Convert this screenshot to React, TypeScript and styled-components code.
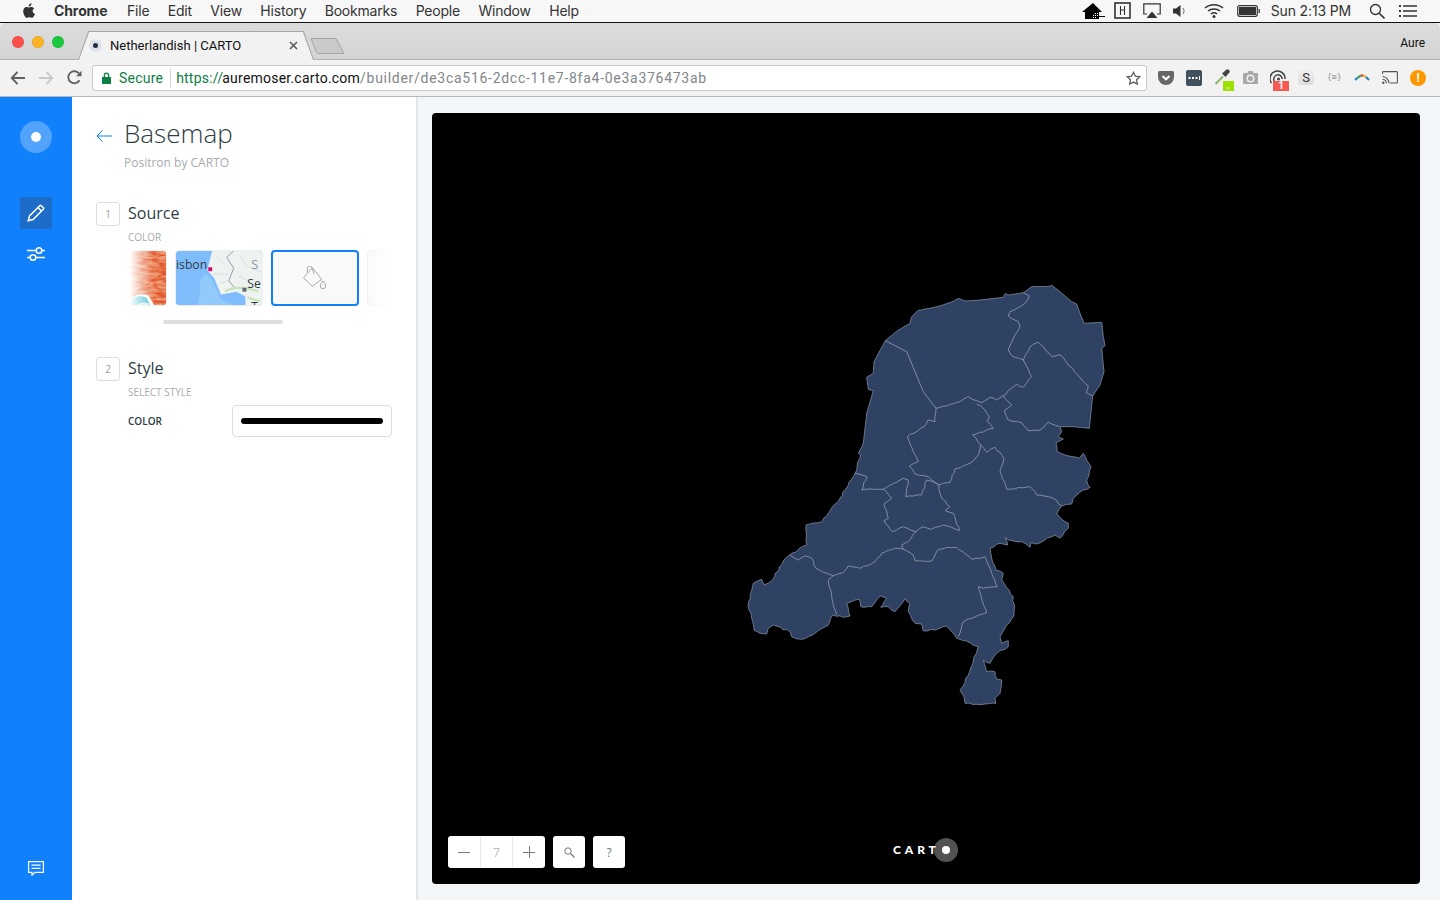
import React from "react";
import styled, { createGlobalStyle } from "styled-components";

const GlobalStyle = createGlobalStyle`
  html, body { margin: 0; padding: 0; height: 100%; overflow: hidden; background: #f2f6f9; }
  #root { height: 100%; }
  * { box-sizing: border-box; }
`;

const Screen = styled.div`
  width: 1440px;
  height: 900px;
  display: flex;
  flex-direction: column;
  overflow: hidden;
  font-family: "Open Sans", sans-serif;
`;

/* mac menu bar */
const MenuBar = styled.div`
  height: 23px;
  flex: none;
  display: flex;
  align-items: center;
  background: #f7f7f7;
  border-bottom: 1px solid #111;
  padding: 0 23px 1px 21px;
  font-family: Inter, sans-serif;
  font-size: 14px;
  color: #333;
`;

const MenuItems = styled.div`
  display: flex;
  align-items: center;
  gap: 18.4px;
  margin-left: 19px;
  flex: 1;
`;

const MenuItem = styled.span<{ $bold?: boolean }>`
  font-weight: ${(p) => (p.$bold ? 700 : 400)};
  letter-spacing: ${(p) => (p.$bold ? "-0.1px" : "-0.2px")};
  margin-right: ${(p) => (p.$bold ? "1px" : "0")};
`;

const Status = styled.div`
  display: flex;
  align-items: center;
`;

const Clock = styled.span`
  margin: 0 18px 0 11px;
  letter-spacing: -0.15px;
`;

/* browser chrome */
const TabStrip = styled.div`
  height: 37px;
  flex: none;
  display: flex;
  align-items: flex-end;
  background: linear-gradient(#dcdcdc, #d4d4d4);
  border-bottom: 1px solid #b0b0b0;
  border-radius: 5px 5px 0 0;
  padding-left: 12px;
`;

const Lights = styled.div`
  display: flex;
  gap: 8px;
  align-self: center;
  margin-top: 1px;
`;

const Light = styled.span<{ $color: string }>`
  width: 12px;
  height: 12px;
  border-radius: 50%;
  background: ${(p) => p.$color};
  box-shadow: inset 0 0 0 0.5px rgba(0, 0, 0, 0.12);
`;

const Tab = styled.div`
  position: relative;
  width: 236px;
  height: 29px;
  margin-left: 14px;
  margin-bottom: -1px;
  display: flex;
  align-items: center;
  padding: 0 16px 0 11px;
  font-family: Roboto, sans-serif;
  font-size: 13px;
  color: #111;

  &::before, &::after {
    content: "";
    position: absolute;
    inset: 0;
    z-index: 0;
  }
  &::before {
    background: #a8a8a8;
    clip-path: polygon(0 100%, 4.3% 0, 95.7% 0, 100% 100%);
  }
  &::after {
    background: #f2f2f2;
    clip-path: polygon(1px 100%, calc(4.3% + 1px) 1px, calc(95.7% - 1px) 1px, calc(100% - 1px) 100%);
  }
  & > * { position: relative; z-index: 1; }
`;

const Favicon = styled.span`
  width: 13px;
  height: 13px;
  border-radius: 50%;
  background: #dfe1e8;
  display: flex;
  align-items: center;
  justify-content: center;
  flex: none;
  &::after {
    content: "";
    width: 5px;
    height: 5px;
    border-radius: 50%;
    background: #1e2a4a;
  }
`;

const TabTitle = styled.span`
  margin-left: 8px;
  flex: 1;
`;

const NewTab = styled.svg`
  margin: 0 0 4px -4px;
  flex: none;
`;

const Profile = styled.span`
  margin-left: auto;
  align-self: center;
  margin-right: 15px;
  margin-top: 3px;
  font-family: Roboto, sans-serif;
  font-size: 12px;
  color: #111;
`;

const Toolbar = styled.div`
  height: 37px;
  flex: none;
  display: flex;
  align-items: center;
  background: #f2f2f2;
  border-bottom: 1px solid #b8b8b8;
  padding: 0 8px 1px 4px;
`;

const NavButton = styled.span`
  width: 28px;
  height: 20px;
  display: flex;
  align-items: center;
  justify-content: center;
  flex: none;
`;

const Omnibox = styled.div`
  width: 1055px;
  height: 26px;
  margin-left: 4px;
  flex: none;
  display: flex;
  align-items: center;
  background: #fff;
  border: 1px solid #c8c8c8;
  border-radius: 3px;
  padding: 0 5px 0 9px;
  font-family: Roboto, sans-serif;
  font-size: 14px;
  letter-spacing: 0.22px;
`;

const Secure = styled.span`
  display: flex;
  align-items: center;
  gap: 8px;
  color: #0b8043;
  padding-right: 7px;
  border-right: 1px solid #d8d8d8;
  height: 20px;
  margin-right: 5px;
`;

const UrlScheme = styled.span`
  color: #0b8043;
`;
const UrlHost = styled.span`
  color: #111;
  margin-left: -1px;
`;
const UrlPath = styled.span`
  color: #80868b;
  letter-spacing: 0.72px;
  flex: 1;
`;

const Extensions = styled.div`
  display: flex;
  margin-left: 5px;
`;

const Extension = styled.span`
  position: relative;
  width: 28px;
  height: 24px;
  display: flex;
  align-items: center;
  justify-content: center;
`;

const Badge = styled.span<{ $bg: string; $wide?: boolean }>`
  position: absolute;
  right: ${(p) => (p.$wide ? "3px" : "2px")};
  bottom: -1px;
  width: ${(p) => (p.$wide ? "16px" : "11px")};
  height: 10px;
  background: ${(p) => p.$bg};
  color: #fff;
  font: 700 10px/10px Roboto, sans-serif;
  text-align: center;
`;

const SBox = styled.span`
  width: 16px;
  height: 15px;
  border-radius: 3px;
  background: linear-gradient(#eeeeee, #dcdcdc);
  color: #333;
  font: 400 13px/15px Roboto, sans-serif;
  text-align: center;
`;

const Braces = styled.span`
  font: 400 9px/1 "DejaVu Sans Mono", monospace;
  letter-spacing: -0.6px;
  color: #999;
`;

const Alert = styled.span`
  width: 16px;
  height: 16px;
  border-radius: 50%;
  background: #ff9800;
  color: #fff;
  font: 700 12px/16px Roboto, sans-serif;
  text-align: center;
`;

/* app */
const Body = styled.div`
  flex: 1;
  min-height: 0;
  display: flex;
`;

const Rail = styled.nav`
  width: 72px;
  flex: none;
  background: #1181fb;
  display: flex;
  flex-direction: column;
  align-items: center;
  padding: 24px 0 24px;
`;

const Logo = styled.div`
  width: 32px;
  height: 32px;
  border-radius: 50%;
  background: rgba(255, 255, 255, 0.27);
  display: flex;
  align-items: center;
  justify-content: center;
  margin-bottom: 44px;
  &::after {
    content: "";
    width: 10px;
    height: 10px;
    border-radius: 50%;
    background: #fff;
  }
`;

const RailButton = styled.div<{ $active?: boolean }>`
  width: 32px;
  height: 32px;
  border-radius: 3px;
  display: flex;
  align-items: center;
  justify-content: center;
  margin-bottom: 9px;
  background: ${(p) => (p.$active ? "#1c6cc8" : "transparent")};
`;

const RailFoot = styled.div`
  margin-top: auto;
  display: flex;
`;

const Panel = styled.aside`
  width: 346px;
  flex: none;
  background: #fff;
  border-right: 2px solid #e3e6e8;
  padding: 20px 24px 0;
`;

const PanelHead = styled.header`
  display: flex;
  align-items: flex-start;
  gap: 12px;
  margin-bottom: 31px;
`;

const BackIcon = styled.svg`
  margin-top: 13px;
  flex: none;
`;

const Title = styled.h1`
  margin: 0;
  font-weight: 300;
  font-size: 26px;
  line-height: 32px;
  color: #2e3c43;
`;

const Subtitle = styled.div`
  margin-top: 6px;
  font-size: 12px;
  line-height: 16px;
  color: #a6acae;
`;

const Section = styled.section`
  display: grid;
  grid-template-columns: 24px 1fr;
  column-gap: 8px;
  margin-bottom: 19px;
`;

const StepBox = styled.div`
  width: 24px;
  height: 24px;
  border: 1px solid #dddddd;
  border-radius: 3px;
  font-size: 10px;
  line-height: 22px;
  text-align: center;
  color: #979ea1;
`;

const StepBody = styled.div`
  min-width: 0;
`;

const StepTitle = styled.h2`
  margin: 0;
  font-weight: 400;
  font-size: 16px;
  line-height: 22px;
  color: #2e3c43;
`;

const Caption = styled.div`
  margin-top: 6px;
  font-size: 10px;
  line-height: 14px;
  color: #a6acae;
`;

const Carousel = styled.div`
  position: relative;
  width: 260px;
  margin-top: 6px;
  overflow: hidden;
  padding-bottom: 14px;

  &::before, &::after {
    content: "";
    position: absolute;
    top: 0;
    height: 56px;
    z-index: 2;
  }
  &::before {
    left: 0;
    width: 26px;
    background: linear-gradient(90deg, #fff 6%, rgba(255, 255, 255, 0));
  }
  &::after {
    right: 0;
    width: 24px;
    background: linear-gradient(270deg, #fff, rgba(255, 255, 255, 0));
  }
`;

const Thumbs = styled.div`
  display: flex;
  gap: 8px;
  margin-left: -49px;
`;

const Thumb = styled.div<{ $selected?: boolean }>`
  width: 88px;
  height: 56px;
  flex: none;
  border-radius: 4px;
  overflow: hidden;
  display: flex;
  align-items: center;
  justify-content: center;
  background: #f9f9f9;
  border: ${(p) => (p.$selected ? "2px solid #1181fb" : "1px solid #eee")};
`;

const ScrollBar = styled.div`
  width: 120px;
  height: 4px;
  margin: 14px 0 0 35px;
  border-radius: 2px;
  background: #dedede;
`;

const FieldRow = styled.div`
  display: flex;
  align-items: center;
  justify-content: space-between;
  margin: 6px 0 0;
  width: 264px;
`;

const FieldLabel = styled.label`
  font-size: 10px;
  font-weight: 600;
  color: #2e3c43;
`;

const ColorButton = styled.div`
  width: 160px;
  height: 32px;
  border: 1px solid #dddddd;
  border-radius: 4px;
  background: #fff;
  padding: 0 8px;
  display: flex;
  align-items: center;
`;

const ColorBar = styled.div`
  height: 6px;
  width: 100%;
  border-radius: 3px;
  background: #000;
`;

const Main = styled.main`
  flex: 1;
  background: #f2f6f9;
  padding: 16px 20px 16px 14px;
  min-width: 0;
`;

const MapCanvas = styled.div`
  position: relative;
  width: 100%;
  height: 100%;
  background: #000;
  border-radius: 4px;
  overflow: hidden;
`;

const MapSvg = styled.svg`
  position: absolute;
  inset: 0;
  width: 100%;
  height: 100%;
`;

const MapTools = styled.div`
  position: absolute;
  left: 16px;
  bottom: 16px;
  display: flex;
  gap: 8px;
`;

const ToolGroup = styled.div<{ $zoom?: boolean }>`
  display: flex;
  width: ${(p) => (p.$zoom ? "97px" : "32px")};
  height: 32px;
  background: #fff;
  border-radius: 3px;
  overflow: hidden;
`;

const ToolCell = styled.div<{ $muted?: boolean }>`
  flex: 1;
  display: flex;
  align-items: center;
  justify-content: center;
  font-size: 12px;
  color: ${(p) => (p.$muted ? "#b8bcbe" : "#747b7e")};
  & + & {
    border-left: 1px solid #e8e8e8;
  }
`;

const CartoMark = styled.div`
  position: absolute;
  left: 461px;
  bottom: 22px;
  height: 24px;
  display: flex;
  align-items: center;
  font-family: Lato, sans-serif;
  font-weight: 900;
  font-size: 12px;
  letter-spacing: 3.9px;
  color: #fff;
`;

const CartoWord = styled.span`
  margin-top: -1px;
`;

const CartoDot = styled.span`
  width: 24px;
  height: 24px;
  margin-left: -6px;
  border-radius: 50%;
  background: rgba(255, 255, 255, 0.32);
  display: flex;
  align-items: center;
  justify-content: center;
  &::after {
    content: "";
    width: 8px;
    height: 8px;
    border-radius: 50%;
    background: #fff;
  }
`;

const NL_OUTLINE =
  "885.3,340.7 897,331 910,323.3 911.3,317.3 917.7,310.7 940,306 953.3,301.3 958.3,298.3 965,301 980,300 1003.3,297.3 1005,293.7 1008.3,295 1023.3,292.7 1031.7,286.7 1049.3,286.3 1051.7,285.3 1060,291.7 1071.7,301.7 1076.7,304 1080,313.3 1084.3,323.3 1101.7,322.3 1103.3,336.7 1105,345.7 1101.7,348.3 1104,371.7 1100,385 1092.7,396 1089.3,428.3 1073.3,426.7 1060,426.7 1061.7,431.7 1058.3,436.7 1063.3,439 1056,442.7 1057.3,451.7 1065,455 1079.3,458.3 1083.3,453.3 1091,466.7 1086.7,480 1090,487.3 1083.3,490 1073.3,498.3 1071.7,504 1061.7,506 1056.7,514 1068.3,523.3 1068.3,528.3 1060,538.3 1055,535 1036.7,544 1030.7,542.7 1030,547.3 1021.7,541.7 1008.3,540 1005,537.3 1007.7,545 1000,543.3 990,548.3 991.7,558.3 996,570 1003.3,573.3 1001.7,580 1013.3,596.7 1014,616 1006.7,625 1000,636.7 1001.7,643.3 1008.3,640.7 1008.3,646.7 996.7,653.3 990,663.3 983.3,660 986.7,671.7 995,671.7 996.7,679 1001.7,680 1000,693.3 995,698.3 995.7,703.3 985,704 965,703.3 964,696.7 960,690 968.3,675 973.3,660 978.3,646.7 970,642.7 956.7,638.3 946.7,626 935,630 923.3,630.7 921.7,624 915,623.3 908.3,611.7 910,603.3 905,598.3 895,611.7 888.3,606.7 880.7,607.3 886.7,598.3 880.7,596 871.7,606.7 860.7,606.7 859.3,599.3 846.7,603.3 850,616 843.3,617.3 832.7,615 828.3,625 815,633.3 801.7,639.3 791.7,636.7 790,631.7 773.3,625 768.3,628.3 766.7,634 760,633.3 754,630 752.7,621.7 748,606 753.3,583.3 761.7,579.3 764,585 772.7,580 783.3,560.7 791.7,553.3 806.7,545 806,525 821.7,521.7 840,498.3 855,473.3 860.7,455 858.3,453.3 863.3,443.3 866.7,413.3 873.3,390.7 868.3,389.3 866.7,377.3 873.3,373.3 874,361.7";

const NL_BORDERS = [
  "885.3,340.7 906.7,351.7 923.3,391.7 936,408.3",
  "1023.3,292.7 1029.3,296 1025,303.3 1010,311.7 1008.3,316 1018.3,321.7 1020,326.7 1013.3,338.3 1008.3,350 1011.7,355.7 1023.3,360 1031.7,376.7 1023.3,387.3 1016.7,384 1003.3,395.7 996.7,400 990,397.3 981.7,402.7 976.7,400.7 968.3,396.7 960,401.7 936,408.3 935,421.7 928.3,420 924.3,426.7 907.3,436.7 918.3,461.7 909.3,466 915,474 928.3,476.7 939,485 950,482.3 955,469 970,463.3 978.3,455 980.7,445 972.7,435 993.3,428.3 987.3,421.7 989.3,416.7 985,410 976.7,404",
  "1023.3,360 1030,346.7 1038.3,342.3 1051.7,356.7 1060,354.7 1085,383.3 1088.3,386 1086,392.7 1092.7,396",
  "1003.3,395.7 1011.7,405 1004.3,410.7 1008.3,420 1021.7,422.7 1028.3,431 1040,430 1048.3,422.3 1059.3,426.7",
  "980.7,445 986.7,452.3 995,447.3 1004,458.3 1000,471.7 1006.7,489.3 1030,486.7 1036.7,495 1053.3,498.3 1061.7,506",
  "855,473.3 866.7,476.7 861.7,490 876.7,489.3 883.3,489.3 903.3,478.3 908.3,480 905.7,496.7 921.7,495 926.7,480 932.7,481.7 939,485",
  "883.3,489.3 891.7,498.3 884,504 888.3,518.3 884,520.7 892.7,531.7 903.3,526.7 916,531.7 908.3,541.7 901.7,545 903.3,549.3 895,548.3 881.7,553.3 875,561.7 860,568.3 848.3,566 843.3,572.7 833.3,575.7 816,568.3 811.7,558.3 805,556 798.3,560 790,555",
  "833.3,575.7 828.3,580 831.7,596.7 836.7,615",
  "939,485 940,493.3 941.7,498.3 950,506.7 945,510.7 953.3,513.3 959.3,530.7 943.3,525 931.7,529.3 923.3,526.7 916,531.7",
  "903.3,549.3 913.3,555 915,560.7 931.7,561 938.3,549.3 946.7,547.3 956.7,547.3 971.7,559.3 980.7,558.3 985,556.7 988.3,565 997.3,586.7 983.3,588.3 978.3,586.7 986.7,612.7 963.3,621.7 958.3,636.7",
];

// borders on the land are jagged, so break the long segments up a little
const roughen = (points: string, amp: number, minY = 0) => {
  const pts = points.split(" ").map((p) => p.split(",").map(Number));
  const out: string[] = [];
  pts.forEach(([x, y], i) => {
    out.push(`${x},${y}`);
    const next = pts[i + 1];
    if (!next) return;
    const len = Math.hypot(next[0] - x, next[1] - y);
    const steps = Math.floor(len / 3.5);
    for (let s = 1; s < steps; s++) {
      const px = x + ((next[0] - x) * s) / steps;
      const py = y + ((next[1] - y) * s) / steps;
      const h = Math.sin(px * 12.9898 + py * 78.233) * 43758.5453;
      const wobble = py < minY ? 0 : ((h - Math.floor(h)) * 2 - 1) * amp;
      out.push(`${(px - ((next[1] - y) / len) * wobble).toFixed(1)},${(py + ((next[0] - x) / len) * wobble).toFixed(1)}`);
    }
  });
  return out.join(" ");
};

const menuItems = ["File", "Edit", "View", "History", "Bookmarks", "People", "Window", "Help"];

const App = () => {
  return (
    <Screen>
      <GlobalStyle />
      <MenuBar>
        <svg width="14" height="17" viewBox="0 0 14 17">
          <path
            fill="#333"
            d="M11.6 9c0-1.7 1.4-2.5 1.5-2.6-.8-1.2-2.1-1.4-2.5-1.4-1.1-.1-2.1.6-2.6.6-.6 0-1.4-.6-2.3-.6C4.500 5 3.400 5.700 2.800 6.700c-1.300 2.200-.3 5.500.9 7.300.6.9 1.300 1.900 2.300 1.800.9 0 1.300-.6 2.400-.6s1.400.6 2.400.6 1.600-.9 2.200-1.800c.7-1 1-2 1-2.100-.1 0-2.400-.9-2.400-2.900zM9.800 3.600c.5-.6.800-1.500.7-2.300-.7 0-1.600.5-2.100 1.100-.5.5-.9 1.400-.8 2.200.8.1 1.700-.4 2.200-1z"
          />
        </svg>
        <MenuItems>
          <MenuItem $bold>Chrome</MenuItem>
          {menuItems.map((item) => (
            <MenuItem key={item}>{item}</MenuItem>
          ))}
        </MenuItems>
        <Status>
          <svg width="23" height="16" viewBox="0 0 23 16" style={{ marginRight: 9 }}>
            <path fill="#000" d="M11 0 L0 9 L3 9 L3 16 L17 16 L17 9 L20 9 Z" />
            <path stroke="#000" strokeWidth="1" d="M16 13.500 H23" />
            <path fill="#fff" d="M13 10h1v1h-1zM15 10h1v1h-1zM13 12h1v1h-1zM15 12h1v1h-1zM11 12h1v1h-1zM11 14h1v1h-1zM13 14h1v1h-1z" />
          </svg>
          <svg width="17" height="17" viewBox="0 0 17 17" style={{ marginRight: 12 }}>
            <rect x="1" y="1" width="15" height="15" fill="none" stroke="#333" strokeWidth="1.600" />
            <path stroke="#333" strokeWidth="1.100" fill="none" d="M6.500 4v9M10.500 4v9M6.500 8h4" />
          </svg>
          <svg width="18" height="15" viewBox="0 0 18 15" style={{ marginRight: 12 }}>
            <path fill="none" stroke="#333" strokeWidth="1.200" d="M4 11H.8V.8h16.400V11H14" />
            <path fill="#333" d="M3.500 15 9 8.500 14.500 15z" />
          </svg>
          <svg width="14" height="12" viewBox="0 0 14 12" style={{ marginRight: 17 }}>
            <path fill="#333" d="M0 3.500h3L7.500 0v12L3 8.500H0z" />
            <path fill="none" stroke="#666" strokeWidth="1" d="M10 3c1.300 1.800 1.300 4.200 0 6" />
          </svg>
          <svg width="20" height="15" viewBox="0 0 20 15" style={{ marginRight: 13 }}>
            <path fill="none" stroke="#333" strokeWidth="1.500" d="M1 5c5-4.500 13-4.500 18 0M4 8c3.200-2.800 8.800-2.800 12 0M7 11c1.700-1.300 4.300-1.300 6 0" />
            <circle cx="10" cy="13.500" r="1.500" fill="#333" />
          </svg>
          <svg width="23" height="12" viewBox="0 0 23 12">
            <rect x=".7" y=".7" width="19.600" height="10.600" rx="2" fill="none" stroke="#333" strokeWidth="1.200" />
            <rect x="2" y="2" width="17" height="8" fill="#333" />
            <rect x="21.500" y="4" width="1.500" height="4" fill="#555" />
          </svg>
          <Clock>Sun 2:13 PM</Clock>
          <svg width="16" height="16" viewBox="0 0 16 16" style={{ marginRight: 14 }}>
            <circle cx="6.500" cy="6.500" r="5" fill="none" stroke="#333" strokeWidth="1.300" />
            <path stroke="#333" strokeWidth="1.600" d="M10.200 10.200 15.500 15.500" />
          </svg>
          <svg width="18" height="12" viewBox="0 0 18 12">
            <path fill="#333" d="M0 0h2v2H0zM0 5h2v2H0zM0 10h2v2H0zM4 .2h14v1.600H4zM4 5.200h14v1.600H4zM4 10.200h14v1.600H4z" />
          </svg>
        </Status>
      </MenuBar>

      <TabStrip>
        <Lights>
          <Light $color="#fc4f4a" />
          <Light $color="#fdb324" />
          <Light $color="#19c93b" />
        </Lights>
        <Tab>
          <Favicon />
          <TabTitle>Netherlandish | CARTO</TabTitle>
          <svg width="9" height="9" viewBox="0 0 9 9">
            <path stroke="#5a5a5a" strokeWidth="1.600" d="M1 1 8 8M8 1 1 8" />
          </svg>
        </Tab>
        <NewTab width="36" height="18" viewBox="0 0 36 18">
          <path d="M1 1.500 H26 L34 16.500 H8 Q7 16.500 6.500 15.500 Z" fill="#cacaca" stroke="#a4a4a4" strokeWidth="1" />
        </NewTab>
        <Profile>Aure</Profile>
      </TabStrip>

      <Toolbar>
        <NavButton>
          <svg width="16" height="14" viewBox="0 0 16 14">
            <path fill="none" stroke="#5f5f5f" strokeWidth="1.800" d="M15 7H2M7.500 1 1.700 7l5.800 6" />
          </svg>
        </NavButton>
        <NavButton>
          <svg width="16" height="14" viewBox="0 0 16 14">
            <path fill="none" stroke="#c8c8c8" strokeWidth="1.800" d="M1 7h13M8.500 1l5.800 6-5.800 6" />
          </svg>
        </NavButton>
        <NavButton>
          <svg width="15" height="15" viewBox="0 0 15 15">
            <path fill="none" stroke="#5f5f5f" strokeWidth="1.800" d="M12.500 10.200A6 6 0 1 1 12 3.500" />
            <path fill="#5f5f5f" d="M14.500 .8v5.500H9z" />
          </svg>
        </NavButton>
        <Omnibox>
          <Secure>
            <svg width="9" height="12" viewBox="0 0 9 12">
              <path fill="#0b8043" d="M0 5h9v7H0zM1.700 5V3.200a2.800 2.800 0 0 1 5.600 0V5H6V3.300a1.500 1.500 0 0 0-3 0V5z" />
            </svg>
            Secure
          </Secure>
          <UrlScheme>https://</UrlScheme>
          <UrlHost>auremoser.carto.com</UrlHost>
          <UrlPath>/builder/de3ca516-2dcc-11e7-8fa4-0e3a376473ab</UrlPath>
          <svg width="15" height="14" viewBox="0 0 15 14">
            <path fill="none" stroke="#5f5f5f" strokeWidth="1.300" d="m7.500 1.300 1.900 3.900 4.300.6-3.100 3 .7 4.300-3.800-2-3.800 2 .7-4.300-3.100-3 4.300-.6z" />
          </svg>
        </Omnibox>
        <Extensions>
          <Extension>
            <svg width="16" height="14" viewBox="0 0 16 14">
              <path fill="#666" d="M1.500 0h13A1.500 1.500 0 0 1 16 1.500V6a8 8 0 0 1-16 0V1.500A1.500 1.500 0 0 1 1.500 0z" />
              <path fill="none" stroke="#fff" strokeWidth="2" d="m4.500 5 3.500 3.300L11.500 5" />
            </svg>
          </Extension>
          <Extension>
            <svg width="16" height="16" viewBox="0 0 16 16">
              <rect width="16" height="16" rx="2" fill="#40505c" />
              <path fill="#fff" d="M2.500 7h2v2h-2zM6 7h2v2H6zM9.500 7h2v2h-2zM13 6h1v4h-1z" />
            </svg>
          </Extension>
          <Extension>
            <svg width="17" height="17" viewBox="0 0 17 17">
              <path fill="none" stroke="#8db56a" strokeWidth="2.200" d="M1.500 15 9 7.500" />
              <path fill="#444" d="M8 4.500 12 1a2 2 0 0 1 3 3l-3.500 4z" />
            </svg>
            <Badge $bg="#9be000">.</Badge>
          </Extension>
          <Extension>
            <svg width="15" height="13" viewBox="0 0 15 13">
              <path fill="#a8a8a8" d="M1 2h3.500l1-2h4l1 2H14a1 1 0 0 1 1 1v9a1 1 0 0 1-1 1H1a1 1 0 0 1-1-1V3a1 1 0 0 1 1-1z" />
              <circle cx="7.500" cy="7.500" r="3.300" fill="none" stroke="#f2f2f2" strokeWidth="1.400" />
            </svg>
          </Extension>
          <Extension>
            <svg width="16" height="16" viewBox="0 0 16 16">
              <path fill="none" stroke="#444" strokeWidth="1.500" d="M1.500 13A7.500 7.500 0 1 1 15 9M4.800 12A4.300 4.300 0 1 1 12.300 9" />
              <circle cx="8.500" cy="9" r="1.500" fill="#444" />
            </svg>
            <Badge $bg="#f65a50" $wide>1</Badge>
          </Extension>
          <Extension>
            <SBox>S</SBox>
          </Extension>
          <Extension>
            <Braces>{"{≡}"}</Braces>
          </Extension>
          <Extension>
            <svg width="16" height="7" viewBox="0 0 16 7">
              <path fill="none" strokeWidth="2.200" stroke="#1f7fc4" d="M1 6 4 3.500" />
              <path fill="none" strokeWidth="2.200" stroke="#3ea34a" d="M4 3.500 7 1.500" />
              <path fill="none" strokeWidth="2.200" stroke="#e0403a" d="M7 1.500h2.500" />
              <path fill="none" strokeWidth="2.200" stroke="#f3b32a" d="M9.500 1.500 12 3" />
              <path fill="none" strokeWidth="2.200" stroke="#2a7fc9" d="M12 3 15 6" />
            </svg>
          </Extension>
          <Extension>
            <svg width="16" height="13" viewBox="0 0 16 13">
              <path fill="none" stroke="#555" strokeWidth="1.100" d="M.6 3V1.200A.6.600 0 0 1 1.200.6h13.600a.6.600 0 0 1 .6.600v10.200a.6.600 0 0 1-.6.600H8" />
              <path fill="none" stroke="#555" strokeWidth="1.100" d="M.5 5.500a7 7 0 0 1 6.500 6.800M.5 8.200a4.300 4.300 0 0 1 3.900 4.100" />
              <circle cx="1.300" cy="11.700" r="1.200" fill="#555" />
            </svg>
          </Extension>
          <Extension>
            <Alert>!</Alert>
          </Extension>
        </Extensions>
      </Toolbar>

      <Body>
        <Rail>
          <Logo />
          <RailButton $active>
            <svg width="18" height="18" viewBox="0 0 18 18">
              <path fill="none" stroke="#fff" strokeWidth="1.500" d="M1.300 16.700 2.500 12 12.800 1.700a1 1 0 0 1 1.400 0l2.100 2.100a1 1 0 0 1 0 1.400L6 15.500z" />
              <path stroke="#fff" strokeWidth="1.500" d="M11 3.500 14.500 7" />
            </svg>
          </RailButton>
          <RailButton>
            <svg width="18" height="16" viewBox="0 0 18 16">
              <path fill="none" stroke="#fff" strokeWidth="1.400" d="M0 4.500h9M15 4.500h3M0 11.500h3M9 11.500h9" />
              <circle cx="12" cy="4.500" r="2.800" fill="none" stroke="#fff" strokeWidth="1.500" />
              <circle cx="6" cy="11.500" r="2.800" fill="none" stroke="#fff" strokeWidth="1.500" />
            </svg>
          </RailButton>
          <RailFoot>
            <svg width="16" height="15" viewBox="0 0 16 15">
              <path fill="none" stroke="#fff" strokeWidth="1.200" d="M.6.600h14.800v10.800H7l-3 2.800v-2.800H.6z" />
              <path stroke="#fff" strokeWidth="1.200" d="M3.500 4.200h9M3.500 7.400h9" />
            </svg>
          </RailFoot>
        </Rail>

        <Panel>
          <PanelHead>
            <BackIcon width="16" height="12" viewBox="0 0 16 12">
              <path fill="none" stroke="#1181fb" strokeWidth="1" d="M16 6H1M6.500.5 1 6l5.500 5.500" />
            </BackIcon>
            <div>
              <Title>Basemap</Title>
              <Subtitle>Positron by CARTO</Subtitle>
            </div>
          </PanelHead>

          <Section>
            <StepBox>1</StepBox>
            <StepBody>
              <StepTitle>Source</StepTitle>
              <Caption>COLOR</Caption>
              <Carousel>
                <Thumbs>
                  <Thumb>
                    <svg width="88" height="56" viewBox="0 0 88 56">
                      <defs>
                        <filter id="stamen" colorInterpolationFilters="sRGB" x="0" y="0" width="100%" height="100%">
                          <feTurbulence type="fractalNoise" baseFrequency="0.1 0.35" numOctaves="3" seed="4" />
                          <feColorMatrix values="0 0 0 0 0.88  0 0 0 0 0.33  0 0 0 0 0.16  2.4 0 0 0 -0.7" />
                          <feComposite in2="SourceGraphic" operator="over" />
                        </filter>
                      </defs>
                      <rect width="88" height="56" fill="#f0a27c" filter="url(#stamen)" />
                      <path d="M48 56 Q54 41 70 46 L76 56 Z" fill="#fff" />
                      <path d="M48 56 Q54 43 68 48 L72 56 Z" fill="#45bfce" />
                      <path d="M58 56 Q62 51 71 54 V56 Z" fill="#c9ecec" />
                    </svg>
                  </Thumb>
                  <Thumb>
                    <svg width="88" height="56" viewBox="0 0 88 56">
                      <rect width="88" height="56" fill="#7fbcfb" />
                      <path d="M22 56 Q26 40 24 30 L30 24 L37 30 L46 50 L60 56 Z" fill="#92cafb" />
                      <path d="M37 0 L34 12 L32 20 L39 28 L46 45 L62 42 L71 47 L71 56 H88 V0 Z" fill="#eef2f1" />
                      <path d="M59 0 L52 7 L59 18 L54 31 L61 39" fill="none" stroke="#9a94ac" strokeWidth="1" />
                      <path d="M42 6 L50 14 M38 24 L54 24 M45 34 L55 30 M66 6 L72 16 L88 22 M64 26 L76 32" fill="none" stroke="#cfd6d4" strokeWidth=".7" />
                      <path d="M50 42 Q62 34 84 42 M73 48 L86 52" fill="none" stroke="#c3e3b5" strokeWidth="2" />
                      <rect x="33" y="17" width="4" height="4" fill="#d5086b" />
                      <rect x="68" y="38" width="4" height="4" fill="#667" />
                      <text x="0" y="19" fontFamily="Open Sans, sans-serif" fontSize="12.500" fill="#2e3c43">isbon</text>
                      <text x="77" y="19" fontFamily="Open Sans, sans-serif" fontSize="13" fill="#8d96a0">S</text>
                      <text x="73" y="38" fontFamily="Open Sans, sans-serif" fontSize="12.500" fill="#2e3c43">Se</text>
                      <text x="77" y="62" fontFamily="Open Sans, sans-serif" fontSize="12" fill="#2e3c43">T</text>
                    </svg>
                  </Thumb>
                  <Thumb $selected>
                    <svg width="24" height="25" viewBox="0 0 24 25">
                      <path fill="none" stroke="#a8a8a8" strokeWidth="1" strokeLinejoin="round" d="M.5 11.700 9.300 1.700 18.700 13.300 9.300 20.300Z" />
                      <path fill="none" stroke="#a8a8a8" strokeWidth="1" d="M4.300 6.700V2.500a2.500 2.500 0 0 1 5 0L11 8" />
                      <path fill="none" stroke="#a8a8a8" strokeWidth="1" d="M20 15c-1.500 2.300-2.700 3.500-2.700 5a2.700 2.700 0 0 0 5.400 0c0-1.500-1.200-2.700-2.700-5z" />
                    </svg>
                  </Thumb>
                  <Thumb />
                </Thumbs>
                <ScrollBar />
              </Carousel>
            </StepBody>
          </Section>

          <Section>
            <StepBox>2</StepBox>
            <StepBody>
              <StepTitle>Style</StepTitle>
              <Caption>SELECT STYLE</Caption>
              <FieldRow>
                <FieldLabel>COLOR</FieldLabel>
                <ColorButton>
                  <ColorBar />
                </ColorButton>
              </FieldRow>
            </StepBody>
          </Section>
        </Panel>

        <Main>
          <MapCanvas>
            <MapSvg viewBox="432 113 988 771">
              <polygon points={roughen(NL_OUTLINE, 0.9, 440)} fill="#2f4264" stroke="#7f8ba0" strokeWidth="0.8" strokeLinejoin="round" />
              {NL_BORDERS.map((points, i) => (
                <polyline key={points} points={i === 0 ? points : roughen(points, 0.7)} fill="none" stroke="#8893a8" strokeWidth="0.9" strokeLinejoin="round" />
              ))}
            </MapSvg>
            <MapTools>
              <ToolGroup $zoom>
                <ToolCell>
                  <svg width="12" height="12" viewBox="0 0 12 12">
                    <path stroke="#747b7e" strokeWidth="1" d="M0 6.500h12" />
                  </svg>
                </ToolCell>
                <ToolCell $muted>7</ToolCell>
                <ToolCell>
                  <svg width="12" height="12" viewBox="0 0 12 12">
                    <path stroke="#747b7e" strokeWidth="1" d="M0 6.500h12M6.500 0v12" />
                  </svg>
                </ToolCell>
              </ToolGroup>
              <ToolGroup>
                <ToolCell>
                  <svg width="11" height="11" viewBox="0 0 11 11">
                    <circle cx="4" cy="4" r="3.200" fill="none" stroke="#747b7e" strokeWidth="1" />
                    <path stroke="#747b7e" strokeWidth="1.200" d="m6.500 6.500 4 4" />
                  </svg>
                </ToolCell>
              </ToolGroup>
              <ToolGroup>
                <ToolCell>?</ToolCell>
              </ToolGroup>
            </MapTools>
            <CartoMark>
              <CartoWord>CART</CartoWord>
              <CartoDot />
            </CartoMark>
          </MapCanvas>
        </Main>
      </Body>
    </Screen>
  );
};

export default App;
